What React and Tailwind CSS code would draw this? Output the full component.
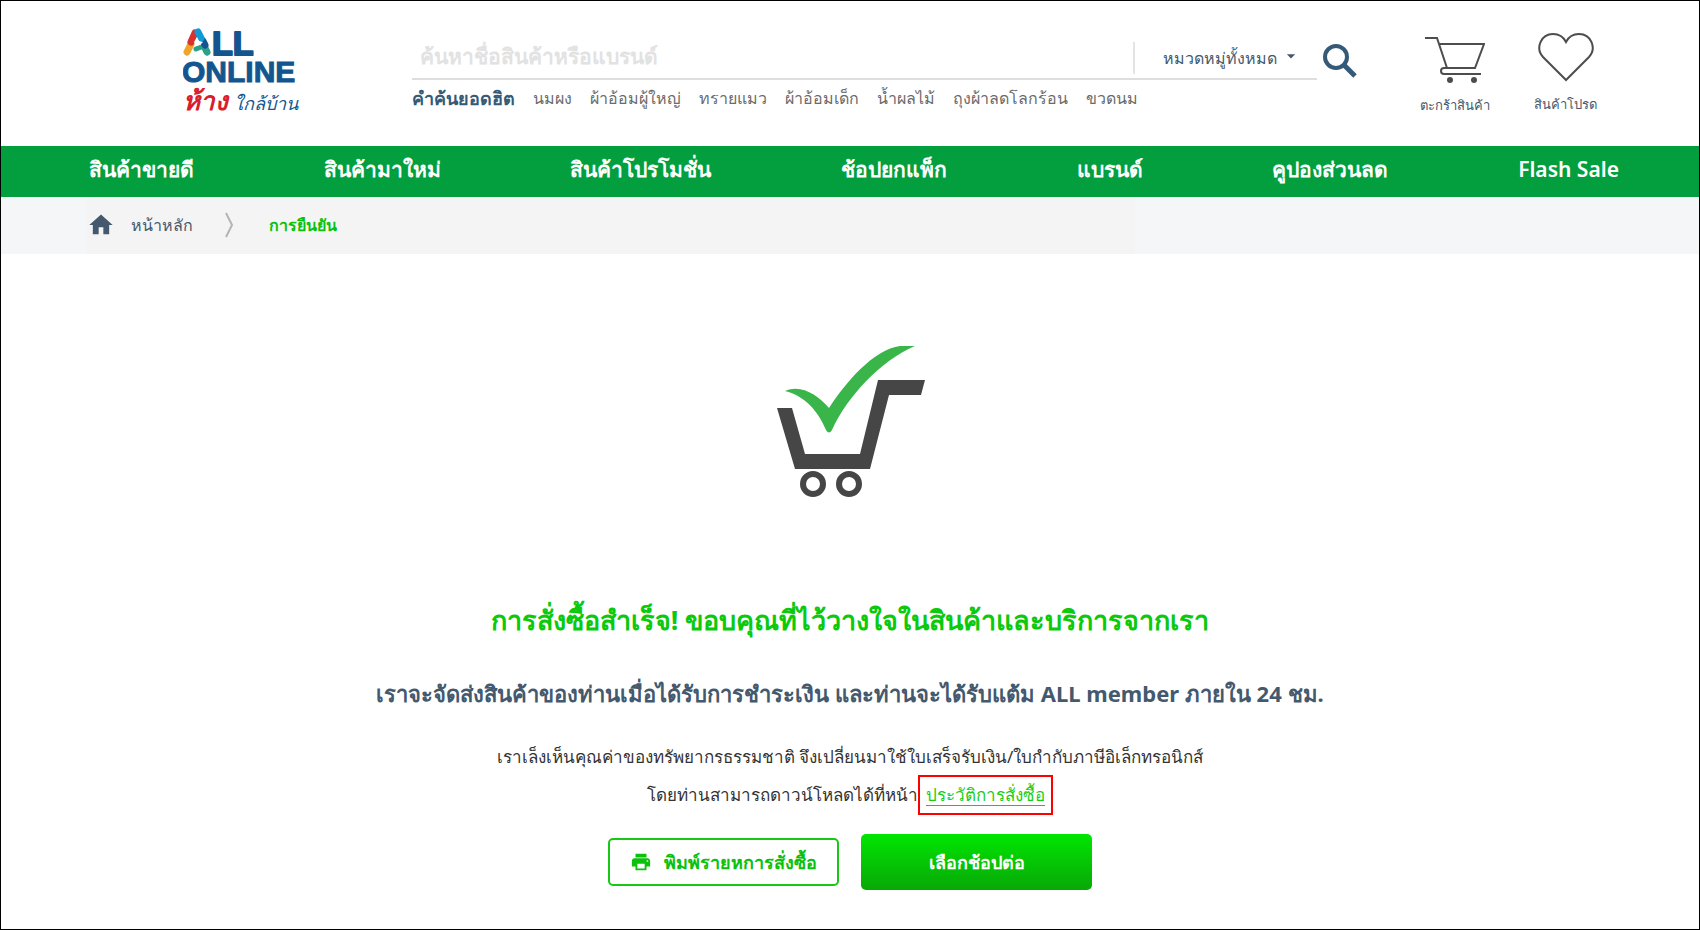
import { MdHome, MdPrint, MdArrowDropDown } from "react-icons/md";

const hotWords = [
  "นมผง",
  "ผ้าอ้อมผู้ใหญ่",
  "ทรายแมว",
  "ผ้าอ้อมเด็ก",
  "น้ำผลไม้",
  "ถุงผ้าลดโลกร้อน",
  "ขวดนม",
];

const menu = [
  "สินค้าขายดี",
  "สินค้ามาใหม่",
  "สินค้าโปรโมชั่น",
  "ช้อปยกแพ็ก",
  "แบรนด์",
  "คูปองส่วนลด",
  "Flash Sale",
];

function Logo() {
  return (
    <svg width="130" height="104" viewBox="0 -10 130 104" role="img" aria-label="ALL ONLINE">
      {/* multi-colour mark */}
      <g fill="none" strokeWidth="7" strokeLinecap="round">
        <path d="M4 24 L8 16" stroke="#efa52a" />
        <path d="M13 21 L18 19" stroke="#2aa287" strokeWidth="5" />
        <path d="M24 24 L22 20" stroke="#2aa287" />
        <path d="M20 13 L22 17" stroke="#13568f" />
        <path d="M8 14 L12 5" stroke="#d9322e" />
        <path d="M15 4 L18 10" stroke="#0d9ad6" />
      </g>
      <path d="M14 9l2 4 4 1-3 3-4 1-2-4z" fill="#fff" />
      <g className="font-['Liberation_Sans',sans-serif] font-bold" fill="#13568f" stroke="#13568f">
        <text x="29" y="27" fontSize="34" strokeWidth="2" strokeLinejoin="round">LL</text>
        <text x="-1" y="54" fontSize="30" strokeWidth="1">ONLINE</text>
      </g>
      <g className="font-['Noto_Sans',sans-serif] italic">
        <text x="0" y="82" fontSize="26" fontWeight="700" fill="#d8202c">ห้าง</text>
        <text x="51" y="82" fontSize="18" fontWeight="500" fill="#13568f">ใกล้บ้าน</text>
      </g>
    </svg>
  );
}

function CartIcon() {
  return (
    <svg width="60" height="46" viewBox="0 0 60 46" fill="none" stroke="#4d4d4d" strokeWidth="2">
      <path d="M0 1h12l10 30h28l9-24H14" />
      <path d="M50 31H19q-3 0-3 3t3 3h37" />
      <circle cx="25" cy="43" r="3" fill="#4d4d4d" stroke="none" />
      <circle cx="49" cy="43" r="3" fill="#4d4d4d" stroke="none" />
    </svg>
  );
}

function HeartIcon() {
  return (
    <svg width="56" height="49" viewBox="0 0 56 49" fill="none" stroke="#4d4d4d" strokeWidth="2">
      <path d="M28 47 5 24C-3 15 3 1 15 1c7 0 11 4 13 8 2-4 6-8 13-8 12 0 18 14 10 23z" />
    </svg>
  );
}

function SuccessCart() {
  return (
    <svg width="150" height="154" viewBox="0 0 150 154" aria-hidden="true">
      <path
        d="M2 63h15l13 46h55l18-74h47l-4 15h-32l-19 74H20z"
        fill="#464646"
      />
      <g fill="none" stroke="#464646" strokeWidth="6">
        <circle cx="38" cy="139" r="10" />
        <circle cx="74" cy="139" r="10" />
      </g>
      <path
        d="M10 46c16-7 33 4 44 17C70 38 99 4 125 1h15C105 16 72 52 57 85q-3 5-6 0C43 66 30 51 10 46z"
        fill="#3ab54a"
      />
    </svg>
  );
}

export default function App() {
  return (
    <div className="min-h-screen border border-black bg-white font-['Noto_Sans',sans-serif] text-[#44596d]">
      <header className="flex h-[145px] items-start pr-[102px] pl-[182px]">
        <a href="#" className="mt-[17px] w-[229px] shrink-0">
          <Logo />
        </a>

        <div className="mt-8 flex-1">
          <form className="flex items-center">
            <div className="flex h-[47px] flex-1 items-center border-b-2 border-[#dedede]">
              <input
                type="text"
                aria-label="ค้นหา"
                placeholder="ค้นหาชื่อสินค้าหรือแบรนด์"
                className="h-full min-w-0 flex-1 px-2 text-[21px] font-bold outline-none placeholder:text-[#e2e2e2]"
              />
              <div className="flex items-center pt-1">
                <div className="h-8 w-[2px] bg-[#e4e4e4]" />
                <div className="relative ml-7 w-[154px]">
                  <select
                    aria-label="หมวดหมู่"
                    className="w-full appearance-none bg-transparent text-[16px] outline-none"
                  >
                    <option>หมวดหมู่ทั้งหมด</option>
                  </select>
                  <MdArrowDropDown className="pointer-events-none absolute top-0 right-4 size-5" />
                </div>
              </div>
            </div>
            <button type="submit" aria-label="ค้นหา" className="ml-[6px] pt-2">
              <svg width="34" height="34" viewBox="0 0 34 34" fill="none" stroke="#355a77">
                <circle cx="13" cy="13" r="11" strokeWidth="4" />
                <path d="M21 21l11 11" strokeWidth="5" />
              </svg>
            </button>
          </form>
          <div className="flex h-9 items-center gap-[18px] text-[16px] whitespace-nowrap text-[#6b6b6b]">
            <span className="text-[18px] font-bold text-[#355a77]">คำค้นยอดฮิต</span>
            {hotWords.map((word) => (
              <a key={word} href="#">
                {word}
              </a>
            ))}
          </div>
        </div>

        <div className="ml-[63px] flex gap-11 text-[13px] leading-5">
          <a href="#" className="flex flex-col items-center pt-9">
            <CartIcon />
            <span className="mt-3">ตะกร้าสินค้า</span>
          </a>
          <a href="#" className="flex flex-col items-center pt-8">
            <HeartIcon />
            <span className="mt-3">สินค้าโปรด</span>
          </a>
        </div>
      </header>

      <nav className="flex h-[51px] items-center justify-between bg-[#039f3e] pr-20 pb-1 pl-[88px] text-[21px] font-semibold whitespace-nowrap text-white">
        {menu.map((item) => (
          <a key={item} href="#">
            {item}
          </a>
        ))}
      </nav>

      <div className="bg-[#f5f6f8] pl-[86px] text-[16px]">
        <div className="flex h-[57px] w-[65%] items-center bg-[#f4f4f4] pb-[2px]">
          <a href="#" className="flex items-center gap-4">
            <MdHome className="size-7" />
            <span>หน้าหลัก</span>
          </a>
          <svg width="8" height="26" viewBox="0 0 8 26" fill="none" className="mr-9 ml-8">
            <path d="M1 1l6 12-6 12" stroke="#b5b5b5" strokeWidth="2" />
          </svg>
          <span className="font-bold text-[#0bc10b]">การยืนยัน</span>
        </div>
      </div>

      <main className="flex flex-col items-center pt-[91px] pb-9 text-center">
        <SuccessCart />
        <h1 className="mt-[97px] text-[27px] leading-[48px] font-bold text-[#0bc90b]">
          การสั่งซื้อสำเร็จ! ขอบคุณที่ไว้วางใจในสินค้าและบริการจากเรา
        </h1>
        <h2 className="mt-[25px] text-[22px] leading-[48px] font-bold">
          เราจะจัดส่งสินค้าของท่านเมื่อได้รับการชำระเงิน และท่านจะได้รับแต้ม ALL member ภายใน 24 ชม.
        </h2>
        <p className="mt-[22px] text-[17px] leading-9 text-[#333]">
          เราเล็งเห็นคุณค่าของทรัพยากรธรรมชาติ จึงเปลี่ยนมาใช้ใบเสร็จรับเงิน/ใบกำกับภาษีอิเล็กทรอนิกส์
          <br />
          โดยท่านสามารถดาวน์โหลดได้ที่หน้า
          <span className="inline-block border-2 border-[#f00] px-[6px]">
            <a href="#" className="text-[#18cd18] underline decoration-1 underline-offset-4">
              ประวัติการสั่งซื้อ
            </a>
          </span>
        </p>
        <div className="mt-[19px] flex items-center gap-[22px] text-[18px] font-semibold">
          <button
            type="button"
            className="flex h-12 w-[231px] items-center justify-center gap-3 rounded-[5px] border-2 border-[#18c818] text-[#0bc10b]"
          >
            <MdPrint className="size-[22px]" />
            พิมพ์รายหการสั่งซื้อ
          </button>
          <button
            type="button"
            className="h-14 w-[231px] rounded-[5px] bg-linear-to-b from-[#00e600] to-[#07a807] text-white"
          >
            เลือกช้อปต่อ
          </button>
        </div>
      </main>
    </div>
  );
}
